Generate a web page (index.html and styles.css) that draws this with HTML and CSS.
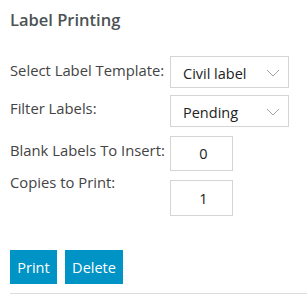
FILE: index.html
```html
<!DOCTYPE html>
<html lang="en">
<head>
    <meta charset="UTF-8">
    <meta name="viewport" content="width=device-width, initial-scale=1.0">
    <title>Label Printing</title>
    <link rel="stylesheet" href="styles.css">
</head>
<body>
    <div class="panel">
        <h1 class="title">Label Printing</h1>

        <div class="form">
            <div class="row row-template">
                <label class="field-label">Select Label Template:</label>
                <div class="select">
                    <span>Civil label</span>
                    <svg class="chevron" width="14" height="8" viewBox="0 0 14 8"><path d="M1 1 L7 7 L13 1" fill="none" stroke="#9a9a9a" stroke-width="0.9"/></svg>
                </div>
            </div>
            <div class="row row-filter">
                <label class="field-label">Filter Labels:</label>
                <div class="select">
                    <span>Pending</span>
                    <svg class="chevron" width="14" height="8" viewBox="0 0 14 8"><path d="M1 1 L7 7 L13 1" fill="none" stroke="#9a9a9a" stroke-width="0.9"/></svg>
                </div>
            </div>
            <div class="row row-blank">
                <label class="field-label">Blank Labels To Insert:</label>
                <input class="number" type="text" value="0">
            </div>
            <div class="row row-copies">
                <label class="field-label">Copies to Print:</label>
                <input class="number" type="text" value="1">
            </div>
        </div>

        <div class="actions">
            <button class="btn btn-print">Print</button>
            <button class="btn btn-delete">Delete</button>
        </div>
    </div>
</body>
</html>
```

FILE: styles.css
```css
/* General Styles */
body {
    margin: 0;
    font-family: "Open Sans", "Noto Sans", Arial, sans-serif;
    background: #ffffff;
    color: #444444;
}
.panel {
    padding: 0 0 0 10px;
}
.title {
    margin: 0;
    padding-top: 9px;
    font-size: 16.5px;
    line-height: 22px;
    font-weight: 600;
    color: #4b5354;
}
.form {
    margin-top: 25px;
}
.row {
    display: flex;
    align-items: flex-start;
}
.field-label {
    width: 160px;
    font-size: 14.8px;
    line-height: 20px;
    white-space: nowrap;
    color: #444444;
}
.row-template .field-label {
    margin-top: 4px;
}
.row-filter {
    margin-top: 7px;
}
.row-filter .field-label {
    margin-top: 3px;
}
.row-blank {
    margin-top: 9px;
}
.row-blank .field-label {
    margin-top: 4px;
}
.row-copies {
    margin-top: 1px;
}
.row-copies .number {
    margin-top: 8px;
    height: 36px;
}
.select {
    box-sizing: border-box;
    width: 119px;
    height: 32px;
    border: 1px solid #d4d4d4;
    display: flex;
    align-items: center;
    justify-content: space-between;
    padding: 2px 8px 0 12px;
    font-size: 14.5px;
    color: #222222;
}
.chevron {
    display: block;
}
.number {
    box-sizing: border-box;
    width: 63px;
    height: 35px;
    margin: 0;
    border: 1px solid #d4d4d4;
    padding: 0 0 0 4px;
    text-align: center;
    font-family: inherit;
    font-size: 14.5px;
    color: #222222;
    outline: none;
}
.actions {
    display: flex;
    gap: 8px;
    margin-top: 34px;
    padding-bottom: 9px;
    border-bottom: 1px solid #dddddd;
}
.btn {
    height: 34px;
    margin: 0;
    border: none;
    padding: 0;
    background: #0093c6;
    color: #ffffff;
    font-family: inherit;
    font-size: 14.5px;
    cursor: pointer;
}
.btn-print {
    width: 47px;
}
.btn-delete {
    width: 58px;
}
```
